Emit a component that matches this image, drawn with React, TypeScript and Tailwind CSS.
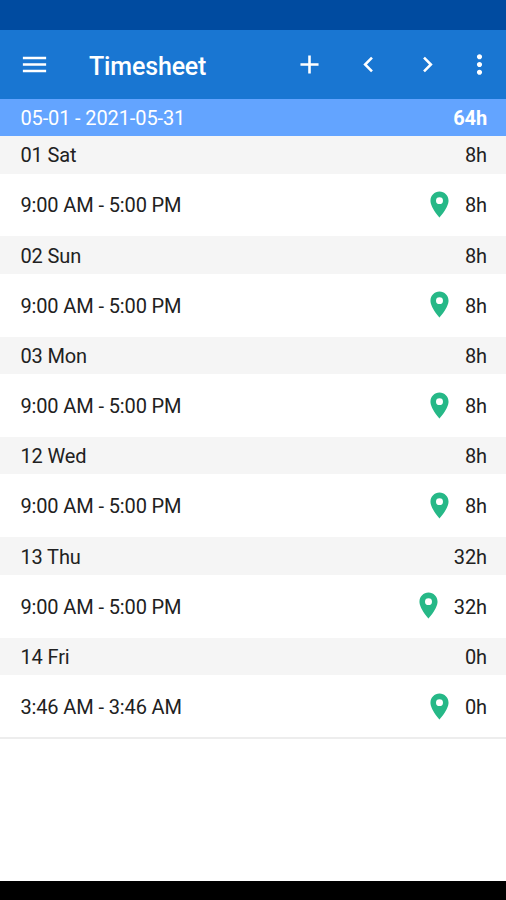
import { clsx } from "clsx";

const days = [
  { day: "01 Sat", time: "9:00 AM - 5:00 PM", hours: "8h" },
  { day: "02 Sun", time: "9:00 AM - 5:00 PM", hours: "8h" },
  { day: "03 Mon", time: "9:00 AM - 5:00 PM", hours: "8h" },
  { day: "12 Wed", time: "9:00 AM - 5:00 PM", hours: "8h" },
  { day: "13 Thu", time: "9:00 AM - 5:00 PM", hours: "32h" },
  { day: "14 Fri", time: "3:46 AM - 3:46 AM", hours: "0h" },
];

const icons = {
  menu: "M3 18h18v-2H3v2zm0-5h18v-2H3v2zm0-7v2h18V6H3z",
  add: "M19 13h-6v6h-2v-6H5v-2h6V5h2v6h6v2z",
  left: "M15.41 7.41L14 6l-6 6 6 6 1.41-1.41L10.83 12z",
  right: "M10 6L8.59 7.41 13.17 12l-4.58 4.59L10 18l6-6z",
  more: "M12 8c1.1 0 2-.9 2-2s-.9-2-2-2-2 .9-2 2 .9 2 2 2zm0 2c-1.1 0-2 .9-2 2s.9 2 2 2 2-.9 2-2-.9-2-2-2zm0 6c-1.1 0-2 .9-2 2s.9 2 2 2 2-.9 2-2-.9-2-2-2z",
  pin: "M12 2C8.13 2 5 5.13 5 9c0 5.25 7 13 7 13s7-7.75 7-13c0-3.87-3.13-7-7-7zm0 9.7a2.7 2.7 0 1 1 0-5.4 2.7 2.7 0 0 1 0 5.4z",
};

function Icon({ name, className }: { name: keyof typeof icons; className?: string }) {
  return (
    <svg
      viewBox="0 0 24 24"
      fill="currentColor"
      className={clsx("size-[31px] shrink-0", className)}
    >
      <path d={icons[name]} />
    </svg>
  );
}

function AppBar() {
  return (
    <header className="flex h-[69px] items-center bg-[#1976d2] pr-[11px] pl-[19px] text-white">
      <button aria-label="Menu">
        <Icon name="menu" />
      </button>
      <h1 className="ml-[39px] flex-1 pt-[3px] text-[25px] leading-none font-medium tracking-[-0.15px]">
        Timesheet
      </h1>
      <div className="flex items-center pb-px">
        <button aria-label="Add">
          <Icon name="add" />
        </button>
        <button aria-label="Previous" className="ml-7">
          <Icon name="left" />
        </button>
        <button aria-label="Next" className="ml-7">
          <Icon name="right" />
        </button>
        <button aria-label="More" className="mt-px ml-[21px]">
          <Icon name="more" />
        </button>
      </div>
    </header>
  );
}

export default function App() {
  return (
    <div className="flex h-[900px] w-[506px] flex-col overflow-hidden bg-white font-['Roboto',sans-serif] text-[20px] leading-6 tracking-[-0.12px] text-[#212121]">
      <div className="h-[30px] bg-[#004ba0]" />
      <AppBar />
      <div className="flex h-[37px] items-center justify-between bg-[#63a4ff] pt-px pr-[19px] pl-[20.4px] text-white">
        <span>05-01 - 2021-05-31</span>
        <span className="font-bold">64h</span>
      </div>
      <main className="flex-1">
        {days.map(({ day, time, hours }) => (
          <section key={day} className="h-[100.33px]">
            <div className="flex h-[37.5px] items-center justify-between bg-[#f5f5f5] pt-px pr-[19px] pl-[20.4px]">
              <span>{day}</span>
              <span>{hours}</span>
            </div>
            <div className="flex h-[62.83px] items-center justify-between pt-px pr-[19px] pl-[20.4px]">
              <span>{time}</span>
              <span className="flex items-center gap-2.5">
                <Icon name="pin" className="-mt-0.5 text-[#26b887]" />
                {hours}
              </span>
            </div>
          </section>
        ))}
        <div className="-mt-px h-0.5 bg-[#ededed]" />
      </main>
      <div className="h-[19px] bg-black" />
    </div>
  );
}
